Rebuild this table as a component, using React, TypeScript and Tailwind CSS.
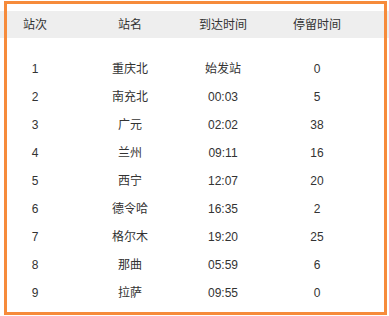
import React from "react";

const rows: [string, string, string, string][] = [
  ["1", "重庆北", "始发站", "0"],
  ["2", "南充北", "00:03", "5"],
  ["3", "广元", "02:02", "38"],
  ["4", "兰州", "09:11", "16"],
  ["5", "西宁", "12:07", "20"],
  ["6", "德令哈", "16:35", "2"],
  ["7", "格尔木", "19:20", "25"],
  ["8", "那曲", "05:59", "6"],
  ["9", "拉萨", "09:55", "0"],
];

export default function App() {
  return (
    <div
      className="relative w-[389px] h-[316px] bg-white text-[12px] text-[#333] pt-[11px]"
      style={{ fontFamily: '"Liberation Sans", "Noto Sans CJK SC", sans-serif' }}
    >
      <div className="grid grid-cols-[70px_120px_66px_122px] h-[27px] items-center bg-[#eeeeee] text-center">
        <div>站次</div>
        <div>站名</div>
        <div>到达时间</div>
        <div>停留时间</div>
      </div>
      <div className="mt-[17px]">
        {rows.map((r) => (
          <div key={r[0]} className="grid grid-cols-[70px_120px_66px_122px] h-[28px] items-center text-center">
            <div>{r[0]}</div>
            <div>{r[1]}</div>
            <div>{r[2]}</div>
            <div>{r[3]}</div>
          </div>
        ))}
      </div>
      <div className="absolute left-[4px] top-[1px] w-[383px] h-[314px] border-[3px] border-[#f68b3b] pointer-events-none" />
    </div>
  );
}
